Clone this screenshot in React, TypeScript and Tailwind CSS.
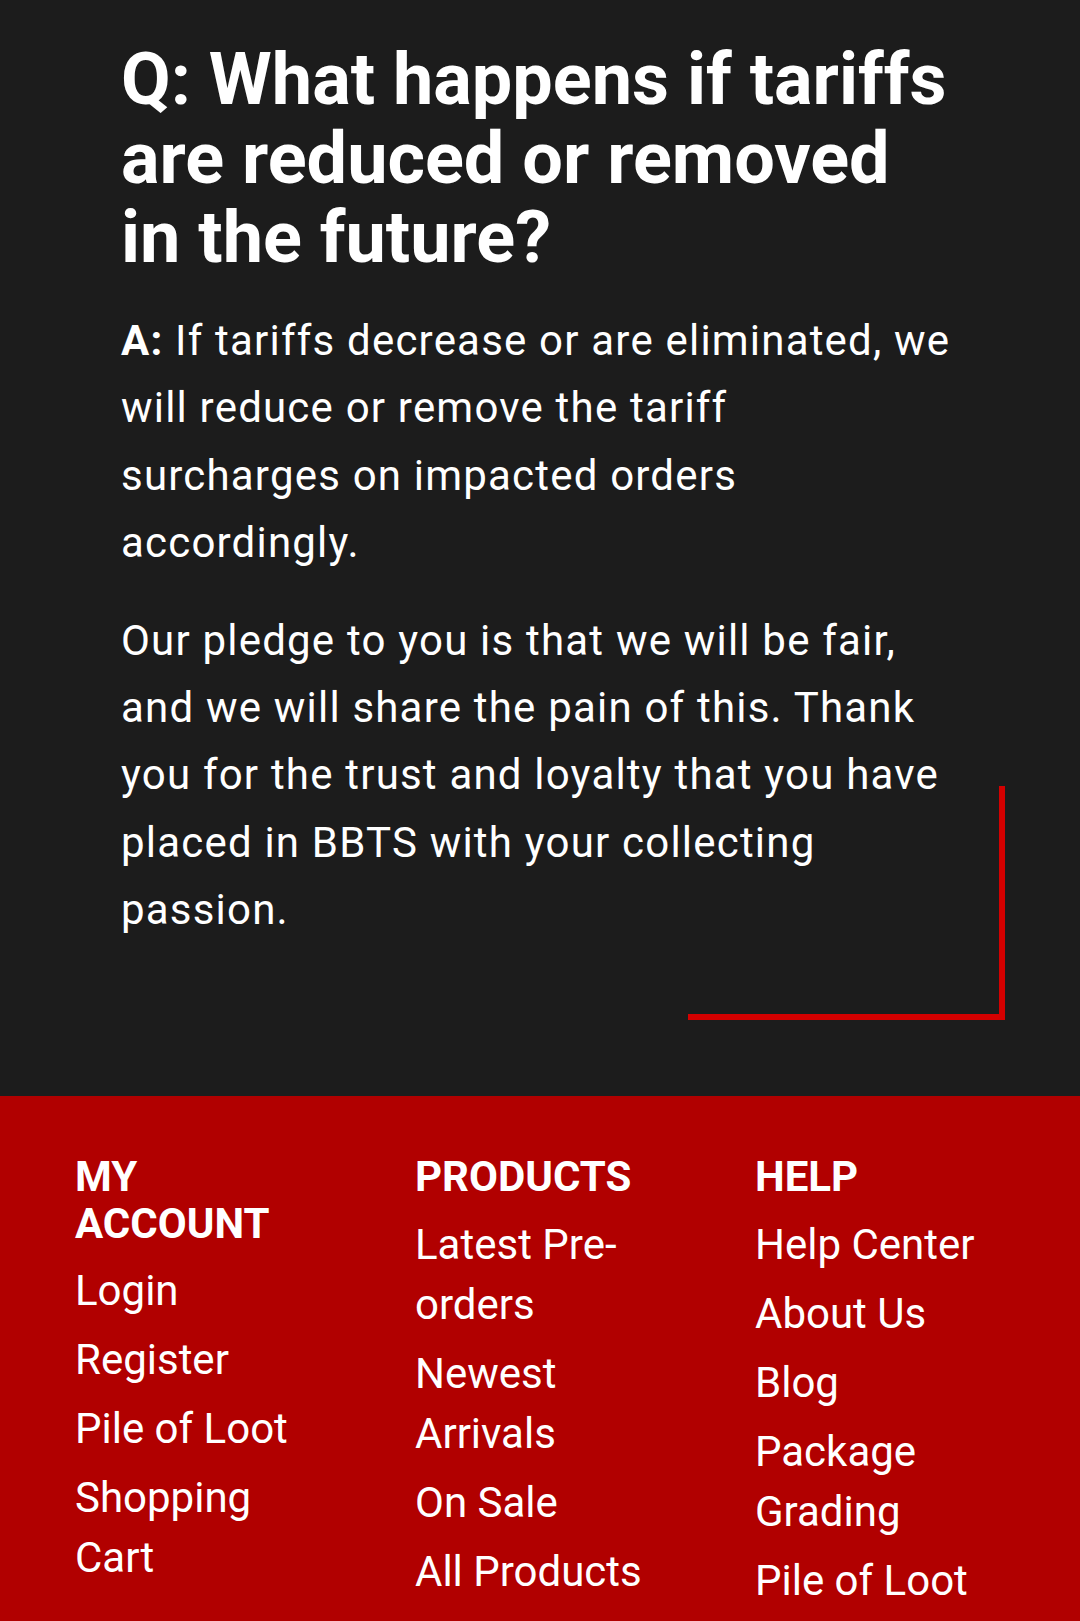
const accountLinks = ["Login", "Register", "Pile of Loot", "Shopping Cart"]
const productLinks = ["Latest Pre-orders", "Newest Arrivals", "On Sale", "All Products"]
const helpLinks = ["Help Center", "About Us", "Blog", "Package Grading", "Pile of Loot"]

interface FooterColumnProps {
  title: string
  links: string[]
}

const FooterColumn = ({ title, links }: FooterColumnProps) => {
  return (
    <div>
      <h3 className="text-[42px] font-bold leading-[46.7px] uppercase mb-[14px]">{title}</h3>
      <ul className="flex flex-col gap-[9px]">
        {links.map((link) => (
          <li key={link} className="text-[42px] leading-[60px]">
            <a href="#">{link}</a>
          </li>
        ))}
      </ul>
    </div>
  )
}

const App = () => {
  return (
    <div className="min-h-screen bg-[#b10000] text-white" style={{ fontFamily: "Roboto, 'Noto Sans', sans-serif" }}>
      <section className="relative bg-[#1c1c1c] pl-[121px] pr-[127px] pt-[41px] pb-[153px]">
        <h2 className="text-[72px] font-bold leading-[78.75px]">
          Q: What happens if tariffs are reduced or removed in the future?
        </h2>
        <p className="mt-[30px] text-[42px] leading-[67.2px] tracking-[1.2px]">
          <strong className="font-bold">A:</strong> If tariffs decrease or are eliminated, we will reduce or remove the
          tariff surcharges on impacted orders accordingly.
        </p>
        <p className="mt-[31px] text-[42px] leading-[67.2px] tracking-[1.2px]">
          Our pledge to you is that we will be fair, and we will share the pain of this. Thank you for the trust and
          loyalty that you have placed in BBTS with your collecting passion.
        </p>
        <div className="absolute right-[75px] top-[786px] w-[317px] h-[234px] border-r-[6px] border-b-[6px] border-[#d40000]" />
      </section>
      <footer className="px-[75px] pt-[58px] pb-[60px]">
        <div className="grid grid-cols-3 gap-x-[90px]">
          <FooterColumn title="My Account" links={accountLinks} />
          <FooterColumn title="Products" links={productLinks} />
          <FooterColumn title="Help" links={helpLinks} />
        </div>
      </footer>
    </div>
  )
}

export default App
